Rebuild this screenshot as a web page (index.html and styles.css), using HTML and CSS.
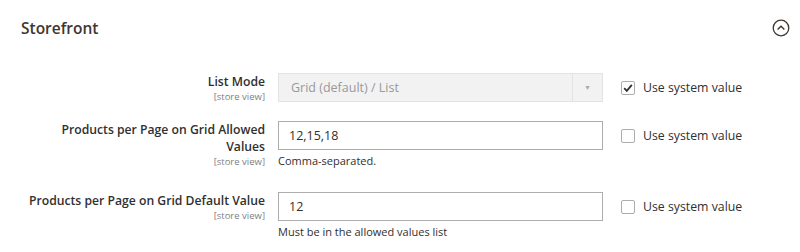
FILE: index.html
```html
<!DOCTYPE html>
<html>
<head>
    <title>Storefront</title>
    <link rel="stylesheet" href="styles.css">
</head>
<body>
    <div class="section">
        <div class="section-head">
            <h2 class="section-title">Storefront</h2>
            <span class="collapse-icon">
                <svg width="18" height="18" viewBox="0 0 18 18">
                    <circle cx="9" cy="9" r="7.8" fill="none" stroke="#41362f" stroke-width="1.3"/>
                    <path d="M5.6 10.6 L9 7.2 L12.4 10.6" fill="none" stroke="#41362f" stroke-width="1.4"/>
                </svg>
            </span>
        </div>

        <div class="rows">
            <div class="row">
                <div class="label">
                    <span class="label-text">List Mode</span>
                    <span class="scope">[store view]</span>
                </div>
                <div class="control">
                    <div class="select disabled">
                        <span class="select-value">Grid (default) / List</span>
                        <span class="select-arrow">&#9660;</span>
                    </div>
                </div>
                <label class="use-default">
                    <span class="checkbox checked">
                        <svg width="12" height="12" viewBox="0 0 12 12">
                            <path d="M2.2 6.2 L4.8 8.8 L9.8 2.8" fill="none" stroke="#303030" stroke-width="1.8"/>
                        </svg>
                    </span>
                    Use system value
                </label>
            </div>

            <div class="row row-allowed">
                <div class="label">
                    <span class="label-text">Products per Page on Grid Allowed Values</span>
                    <span class="scope">[store view]</span>
                </div>
                <div class="control">
                    <input class="text-input" type="text" value="12,15,18">
                    <div class="note">Comma-separated.</div>
                </div>
                <label class="use-default">
                    <span class="checkbox"></span>
                    Use system value
                </label>
            </div>

            <div class="row">
                <div class="label">
                    <span class="label-text">Products per Page on Grid Default Value</span>
                    <span class="scope">[store view]</span>
                </div>
                <div class="control">
                    <input class="text-input" type="text" value="12">
                    <div class="note">Must be in the allowed values list</div>
                </div>
                <label class="use-default">
                    <span class="checkbox"></span>
                    Use system value
                </label>
            </div>
        </div>
    </div>
</body>
</html>
```

FILE: styles.css
```css
body { margin: 0; font-family: "Open Sans", "Liberation Sans", sans-serif; color: #303030; background: #fff; }
.section { width: 800px; }
.section-head { display: flex; justify-content: space-between; align-items: center; padding: 17px 10px 0 21px; height: 22px; }
.section-title { margin: 0; font-size: 15.5px; font-weight: 600; color: #41362f; line-height: 22px; }
.collapse-icon { display: flex; width: 18px; height: 18px; }

.rows { padding-top: 34px; }
.row { display: flex; align-items: flex-start; margin-bottom: 18px; }
.row-allowed { margin-bottom: 24px; }

.label { width: 237px; padding-left: 28px; padding-right: 13px; text-align: right; }
.label-text { display: block; font-size: 12.2px; font-weight: 600; line-height: 17px; color: #303030; }
.scope { display: block; font-size: 9.5px; color: #808080; line-height: 13px; }

.control { width: 325px; }
.text-input { display: block; width: 100%; height: 29px; box-sizing: border-box; border: 1px solid #adadad; padding: 0 10px; font-family: inherit; font-size: 12.5px; color: #303030; outline: none; }
.note { font-size: 11px; color: #303030; line-height: 15px; margin-top: 3px; }

.select { display: flex; height: 29px; box-sizing: border-box; border: 1px solid #e3e3e3; background: #f2f2f2; }
.select-value { flex: 1; padding-left: 12px; font-size: 12.5px; line-height: 27px; color: #999; }
.select-arrow { width: 29px; border-left: 1px solid #e3e3e3; text-align: center; font-size: 7px; line-height: 27px; color: #aaa; }

.use-default { display: flex; align-items: center; gap: 8px; height: 29px; margin-left: 18px; font-size: 12.3px; color: #303030; }
.checkbox { display: flex; align-items: center; justify-content: center; width: 14px; height: 14px; box-sizing: border-box; border: 1px solid #adadad; border-radius: 2px; background: #fff; }
```
